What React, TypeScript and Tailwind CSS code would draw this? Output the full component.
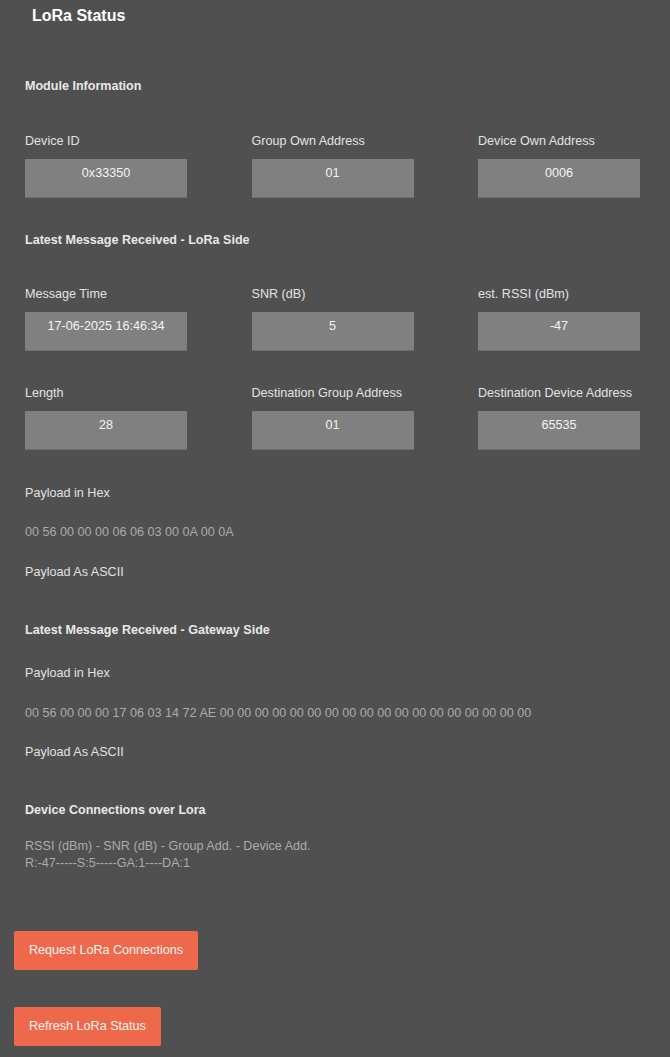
const moduleInfo = [
  { label: 'Device ID', value: '0x33350' },
  { label: 'Group Own Address', value: '01' },
  { label: 'Device Own Address', value: '0006' },
];

const loraRowA = [
  { label: 'Message Time', value: '17-06-2025 16:46:34' },
  { label: 'SNR (dB)', value: '5' },
  { label: 'est. RSSI (dBm)', value: '-47' },
];

const loraRowB = [
  { label: 'Length', value: '28' },
  { label: 'Destination Group Address', value: '01' },
  { label: 'Destination Device Address', value: '65535' },
];

type Field = { label: string; value: string };

const FieldRow = ({ fields, className }: { fields: Field[]; className?: string }) => (
  <div className={`grid grid-cols-[162px_162px_162px] gap-x-[64.5px] ${className ?? ''}`}>
    {fields.map((f) => (
      <div key={f.label} className="flex flex-col">
        <span className="text-[12.6px] leading-[15px] text-[#e2e2e2]">{f.label}</span>
        <div className="mt-[10px] h-[39px] bg-[#808080] border-b border-[#6e6e6e] pt-[7px] text-center text-[12.6px] leading-[15px] text-[#f4f4f4]">
          {f.value}
        </div>
      </div>
    ))}
  </div>
);

const SectionTitle = ({ children, className }: { children: string; className?: string }) => (
  <h2 className={`text-[12.55px] leading-[14px] font-bold text-[#e8e8e8] ${className ?? ''}`}>{children}</h2>
);

const Label = ({ children, className }: { children: string; className?: string }) => (
  <p className={`text-[12.6px] leading-[15px] text-[#e2e2e2] ${className ?? ''}`}>{children}</p>
);

const HexValue = ({ children, className }: { children: string; className?: string }) => (
  <p className={`text-[12.6px] leading-[15px] text-[#ababab] ${className ?? ''}`}>{children}</p>
);

const ActionButton = ({ children, className }: { children: string; className?: string }) => (
  <button
    type="button"
    className={`h-[39px] px-[15px] rounded-[2px] bg-[#ee694c] text-[12.6px] text-[#fff4f0] ${className ?? ''}`}
  >
    {children}
  </button>
);

const App = () => {
  return (
    <div className="min-h-screen w-full bg-[#505050] pb-[11px] font-['Liberation_Sans',Arial,sans-serif]">
      <h1 className="pl-[32px] pt-[7px] text-[16px] leading-[18px] font-bold text-white">LoRa Status</h1>

      <main className="flex flex-col px-[25px]">
        <SectionTitle className="mt-[54px]">Module Information</SectionTitle>
        <FieldRow fields={moduleInfo} className="mt-[41px]" />

        <SectionTitle className="mt-[35px]">Latest Message Received - LoRa Side</SectionTitle>
        <FieldRow fields={loraRowA} className="mt-[40px]" />
        <FieldRow fields={loraRowB} className="mt-[35px]" />

        <Label className="mt-[36px]">Payload in Hex</Label>
        <HexValue className="mt-[24px]">00 56 00 00 00 06 06 03 00 0A 00 0A</HexValue>
        <Label className="mt-[25px]">Payload As ASCII</Label>

        <SectionTitle className="mt-[43px]">Latest Message Received - Gateway Side</SectionTitle>
        <Label className="mt-[29px]">Payload in Hex</Label>
        <HexValue className="mt-[25px]">
          00 56 00 00 00 17 06 03 14 72 AE 00 00 00 00 00 00 00 00 00 00 00 00 00 00 00 00 00 00
        </HexValue>
        <Label className="mt-[24px]">Payload As ASCII</Label>

        <SectionTitle className="mt-[43px]">Device Connections over Lora</SectionTitle>
        <div className="mt-[21px] text-[12.6px] leading-[17px] text-[#ababab]">
          <p>RSSI (dBm) - SNR (dB) - Group Add. - Device Add.</p>
          <p>R:-47-----S:5-----GA:1----DA:1</p>
        </div>
      </main>

      <div className="flex flex-col items-start px-[14px]">
        <ActionButton className="mt-[59px]">Request LoRa Connections</ActionButton>
        <ActionButton className="mt-[37px]">Refresh LoRa Status</ActionButton>
      </div>
    </div>
  );
};

export default App;
